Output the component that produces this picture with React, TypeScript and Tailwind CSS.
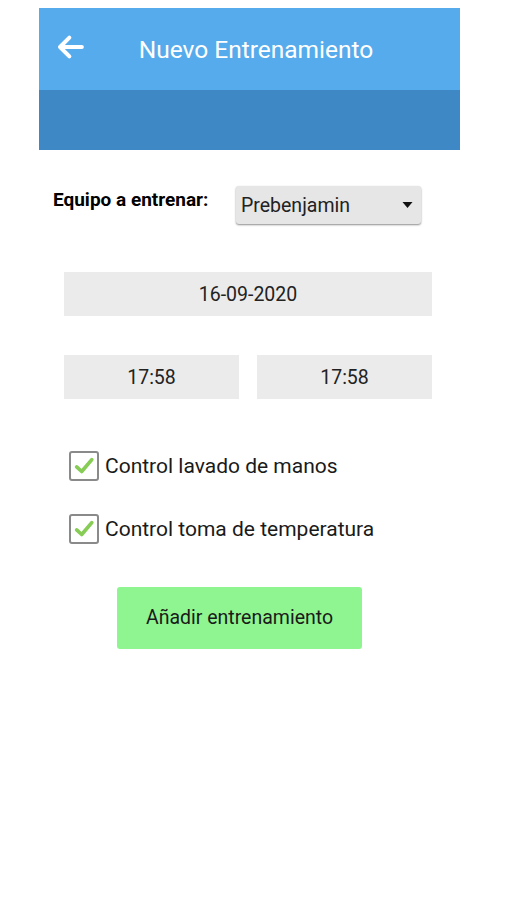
import React from 'react';

function CheckRow({ label }: { label: string }) {
  return (
    <div className="flex items-center h-[30px]">
      <div className="w-[30px] h-[30px] border-2 border-[#8a8a8a] rounded-[3px] bg-white flex items-center justify-center">
        <svg viewBox="0 0 24 24" className="w-[22px] h-[22px]">
          <path d="M4 13 L9.5 18 L20.5 5" fill="none" stroke="#86cc55" strokeWidth="4" strokeLinecap="round" strokeLinejoin="round" />
        </svg>
      </div>
      <span className="ml-[6px] pt-[2px] text-[21px] text-[#1a1a1a]">{label}</span>
    </div>
  );
}

export default function App() {
  return (
    <div className="w-[507px] h-[900px] bg-white pt-[8px] font-['Roboto',sans-serif]">
      <div className="ml-[39px] w-[421px]">
        <div className="h-[82px] bg-[#55abeb] flex items-center relative">
          <svg viewBox="0 0 24 24" className="absolute left-[15px] top-[24px] w-[32px] h-[30px]">
            <path d="M21.5 12 H4.5 M11.5 4.5 L4 12 L11.5 19.5" fill="none" stroke="white" strokeWidth="3.2" strokeLinecap="round" strokeLinejoin="round" />
          </svg>
          <div className="flex-1 text-center text-white text-[24.5px] mt-[2px] pl-[13px]">Nuevo Entrenamiento</div>
        </div>
        <div className="h-[60px] bg-[#3e89c5]" />
      </div>

      <div className="flex items-center mt-[36px] pl-[53px]">
        <span className="text-[19px] font-bold text-black w-[183px] -mt-[10px]">Equipo a entrenar:</span>
        <div className="w-[185px] h-[38px] bg-[#e6e6e6] rounded-[3px] shadow-[0_1px_2px_rgba(0,0,0,0.45)] flex items-center justify-between pl-[5px] pr-[8px]">
          <span className="text-[19.5px] text-[#222] pt-[2px]">Prebenjamin</span>
          <svg viewBox="0 0 10 6" className="w-[11px] h-[6px]">
            <path d="M0 0 H10 L5 6 Z" fill="#111" />
          </svg>
        </div>
      </div>

      <div className="mx-[64px] mt-[48px] w-[368px] h-[44px] bg-[#ebebeb] flex items-center justify-center pt-[2px] text-[19.5px] text-[#222]">
        16-09-2020
      </div>

      <div className="ml-[64px] mt-[39px] w-[368px] grid grid-cols-2 gap-[18px]">
        <div className="h-[44px] bg-[#ebebeb] flex items-center justify-center pt-[2px] text-[19.5px] text-[#222]">17:58</div>
        <div className="h-[44px] bg-[#ebebeb] flex items-center justify-center pt-[2px] text-[19.5px] text-[#222]">17:58</div>
      </div>

      <div className="ml-[69px] mt-[52px] flex flex-col gap-[33px]">
        <CheckRow label="Control lavado de manos" />
        <CheckRow label="Control toma de temperatura" />
      </div>

      <div className="ml-[117px] mt-[43px] w-[245px] h-[62px] bg-[#8ff590] rounded-[3px] flex items-center justify-center text-[19.5px] text-[#1a1a1a]">
        Añadir entrenamiento
      </div>
    </div>
  );
}
